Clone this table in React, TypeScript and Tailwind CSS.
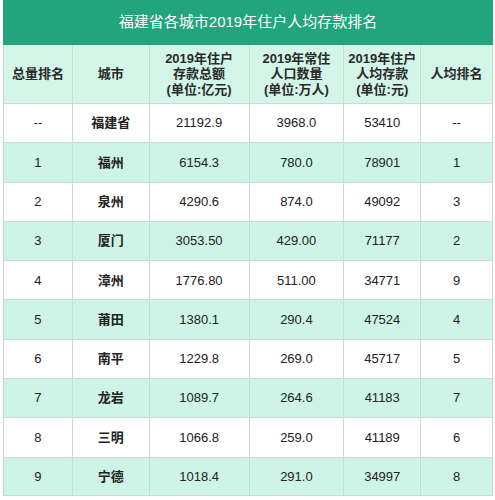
import React from "react";

const rows: string[][] = [
  ["--", "福建省", "21192.9", "3968.0", "53410", "--"],
  ["1", "福州", "6154.3", "780.0", "78901", "1"],
  ["2", "泉州", "4290.6", "874.0", "49092", "3"],
  ["3", "厦门", "3053.50", "429.00", "71177", "2"],
  ["4", "漳州", "1776.80", "511.00", "34771", "9"],
  ["5", "莆田", "1380.1", "290.4", "47524", "4"],
  ["6", "南平", "1229.8", "269.0", "45717", "5"],
  ["7", "龙岩", "1089.7", "264.6", "41183", "7"],
  ["8", "三明", "1066.8", "259.0", "41189", "6"],
  ["9", "宁德", "1018.4", "291.0", "34997", "8"],
];

const widths = ["w-[69px]", "w-[77px]", "w-[100px]", "w-[95px]", "w-[77px]", "w-[72px]"];

const font = { fontFamily: '"Liberation Sans", "Noto Sans CJK SC", sans-serif' };

export default function App() {
  return (
    <div className="w-[495px] h-[500px] bg-white" style={font}>
      <div className="ml-[3px] w-[490px]">
        <div className="h-[45px] bg-[#22a47c] flex items-center justify-center text-white text-[15px]">
          福建省各城市2019年住户人均存款排名
        </div>
        <div className="flex h-[58px] bg-[#d3f6e9] border-l border-[#c9dcd3] text-[13px] leading-[15.5px] font-bold text-[#2a2a2a]">
          {[
            ["总量排名"],
            ["城市"],
            ["2019年住户", "存款总额", "(单位:亿元)"],
            ["2019年常住", "人口数量", "(单位:万人)"],
            ["2019年住户", "人均存款", "(单位:元)"],
            ["人均排名"],
          ].map((lines, i) => (
            <div
              key={i}
              className={`${widths[i]} flex flex-col items-center justify-center border-r border-[#c9dcd3] text-center`}
            >
              {lines.map((l, j) => (
                <div key={j}>{l}</div>
              ))}
            </div>
          ))}
        </div>
        {rows.map((r, ri) => (
          <div
            key={ri}
            className={`flex h-[39.3px] border-t border-l border-[#c9dcd3] text-[13px] text-[#222] ${
              ri % 2 === 1 ? "bg-[#cdf4e6]" : "bg-white"
            } ${ri === rows.length - 1 ? "border-b" : ""}`}
          >
            {r.map((c, ci) => (
              <div
                key={ci}
                className={`${widths[ci]} flex items-center justify-center border-r border-[#c9dcd3] ${
                  ci === 1 ? "font-bold" : ""
                }`}
              >
                {c}
              </div>
            ))}
          </div>
        ))}
      </div>
    </div>
  );
}
